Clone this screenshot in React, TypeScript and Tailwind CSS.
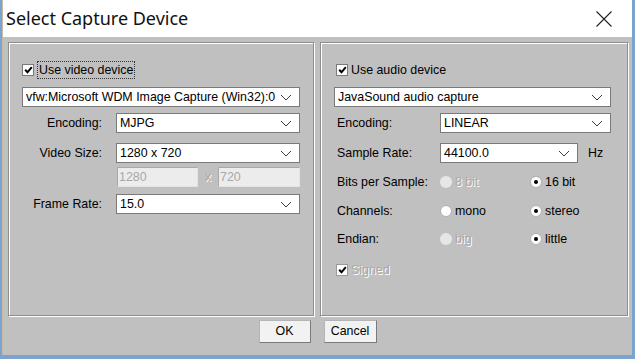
import React from 'react';

const font = { fontFamily: '"Liberation Sans", Arial, sans-serif' };

function Chevron() {
  return (
    <svg width="12" height="7" viewBox="0 0 12 7" className="shrink-0">
      <path d="M1 1 L6 6 L11 1" fill="none" stroke="#3c3c3c" strokeWidth="1" />
    </svg>
  );
}

function Combo({ value, className }: { value: string; className: string }) {
  return (
    <div className={`h-[20px] bg-white border border-[#7a7a7a] flex items-center justify-between pl-[3px] pr-[7px] text-black ${className}`}>
      <span className="whitespace-nowrap">{value}</span>
      <Chevron />
    </div>
  );
}

function Check({ disabled }: { disabled?: boolean }) {
  return (
    <div className={`w-[12px] h-[12px] border ${disabled ? 'border-[#9a9a9a]' : 'border-[#7a7a7a]'} bg-white flex items-center justify-center shrink-0`}>
      <svg width="9" height="8" viewBox="0 0 9 8">
        <path d="M1.2 3.8 L3.5 6.3 L7.8 1.2" fill="none" stroke="#000" strokeWidth="2" />
      </svg>
    </div>
  );
}

function Radio({ label, on, disabled }: { label: string; on?: boolean; disabled?: boolean }) {
  return (
    <div className="flex items-center gap-[3px] w-[90px]">
      <div className={`w-[12px] h-[12px] rounded-full flex items-center justify-center ${disabled ? 'bg-[#e6e6e6]' : 'bg-white border border-[#b0b0b0]'}`}>
        {on && <div className="w-[4px] h-[4px] rounded-full bg-black" />}
      </div>
      <span className={disabled ? 'text-[#a8a8a8] [text-shadow:1px_1px_0_#fff]' : 'text-black'}>{label}</span>
    </div>
  );
}

const panel = 'border border-[#8e8e8e] shadow-[inset_1px_1px_0_#fff,1px_1px_0_#fff] h-[274px]';

export default function App() {
  return (
    <div className="w-[635px] h-[359px] bg-[#7aa3cf] overflow-hidden" style={font}>
      <div className="ml-[2px] w-[630px] h-[355px] flex flex-col bg-[#c0c0c0] border-l border-[#c9b9a9]">
        <div className="h-[37px] bg-white flex items-center justify-between pl-[3px] pr-[20px] shrink-0">
          <span className="text-[18px] text-[#111]" style={{ fontFamily: '"Noto Sans", "Open Sans", sans-serif' }}>
            Select Capture Device
          </span>
          <svg width="16" height="16" viewBox="0 0 16 16">
            <path d="M0.5 0.5 L15.5 15.5 M15.5 0.5 L0.5 15.5" stroke="#222" strokeWidth="1.1" />
          </svg>
        </div>

        <div className="flex gap-[6px] pl-[5px] pt-[5px] text-[12.4px]">
          {/* video */}
          <div className={`${panel} w-[306px] pl-[13px] pt-[20px]`}>
            <div className="flex items-center gap-[3px] h-[14px]">
              <Check />
              <span className="border border-dotted border-[#333] px-[1px] leading-[16px]">Use video device</span>
            </div>
            <Combo value="vfw:Microsoft WDM Image Capture (Win32):0" className="w-[278px] mt-[10px]" />
            <div className="flex items-center mt-[6px]">
              <span className="w-[80px] text-right">Encoding:</span>
              <Combo value="MJPG" className="w-[184px] ml-[14px]" />
            </div>
            <div className="flex items-center mt-[10px]">
              <span className="w-[80px] text-right">Video Size:</span>
              <Combo value="1280 x 720" className="w-[184px] ml-[14px]" />
            </div>
            <div className="flex items-center mt-[4px] ml-[95px]">
              <div className="w-[81px] h-[20px] bg-[#ececec] border border-[#a8a8a8] border-r-[#e4e4e4] border-b-[#e4e4e4] text-[#a8a8a8] px-[1px] leading-[18px]">1280</div>
              <span className="w-[20px] text-center text-[#a8a8a8] [text-shadow:1px_1px_0_#fff]">x</span>
              <div className="w-[82px] h-[20px] bg-[#ececec] border border-[#a8a8a8] border-r-[#e4e4e4] border-b-[#e4e4e4] text-[#a8a8a8] px-[1px] leading-[18px]">720</div>
            </div>
            <div className="flex items-center mt-[7px]">
              <span className="w-[80px] text-right">Frame Rate:</span>
              <Combo value="15.0" className="w-[184px] ml-[14px]" />
            </div>
          </div>

          {/* audio */}
          <div className={`${panel} w-[308px] pl-[13px] pt-[20px]`}>
            <div className="flex items-center gap-[3px] h-[14px] ml-[2px]">
              <Check />
              <span className="leading-[16px]">Use audio device</span>
            </div>
            <Combo value="JavaSound audio capture" className="w-[277px] mt-[10px]" />
            <div className="flex items-center mt-[6px]">
              <span className="w-[106px] pl-[3px]">Encoding:</span>
              <Combo value="LINEAR" className="w-[171px]" />
            </div>
            <div className="flex items-center mt-[10px]">
              <span className="w-[106px] pl-[3px]">Sample Rate:</span>
              <Combo value="44100.0" className="w-[138px]" />
              <span className="ml-[10px]">Hz</span>
            </div>
            <div className="flex items-center mt-[10px] h-[19px]">
              <span className="w-[106px] pl-[3px]">Bits per Sample:</span>
              <Radio label="8 bit" disabled />
              <Radio label="16 bit" on />
            </div>
            <div className="flex items-center mt-[10px] h-[19px]">
              <span className="w-[106px] pl-[3px]">Channels:</span>
              <Radio label="mono" />
              <Radio label="stereo" on />
            </div>
            <div className="flex items-center mt-[9px] h-[19px]">
              <span className="w-[106px] pl-[3px]">Endian:</span>
              <Radio label="big" disabled />
              <Radio label="little" on />
            </div>
            <div className="flex items-center gap-[3px] mt-[13px] h-[16px] ml-[2px]">
              <Check disabled />
              <span className="text-[#a8a8a8] [text-shadow:1px_1px_0_#fff]">Signed</span>
            </div>
          </div>
        </div>

        <div className="flex justify-center gap-[13px] mt-[4px] text-[12.4px]">
          <button className="w-[52px] h-[23px] bg-[#f2f2f2] border border-[#b5b5b5] border-r-[#7a7a7a] border-b-[#7a7a7a]">OK</button>
          <button className="w-[53px] h-[23px] bg-[#f2f2f2] border border-[#b5b5b5] border-r-[#7a7a7a] border-b-[#7a7a7a]">Cancel</button>
        </div>
      </div>
    </div>
  );
}
